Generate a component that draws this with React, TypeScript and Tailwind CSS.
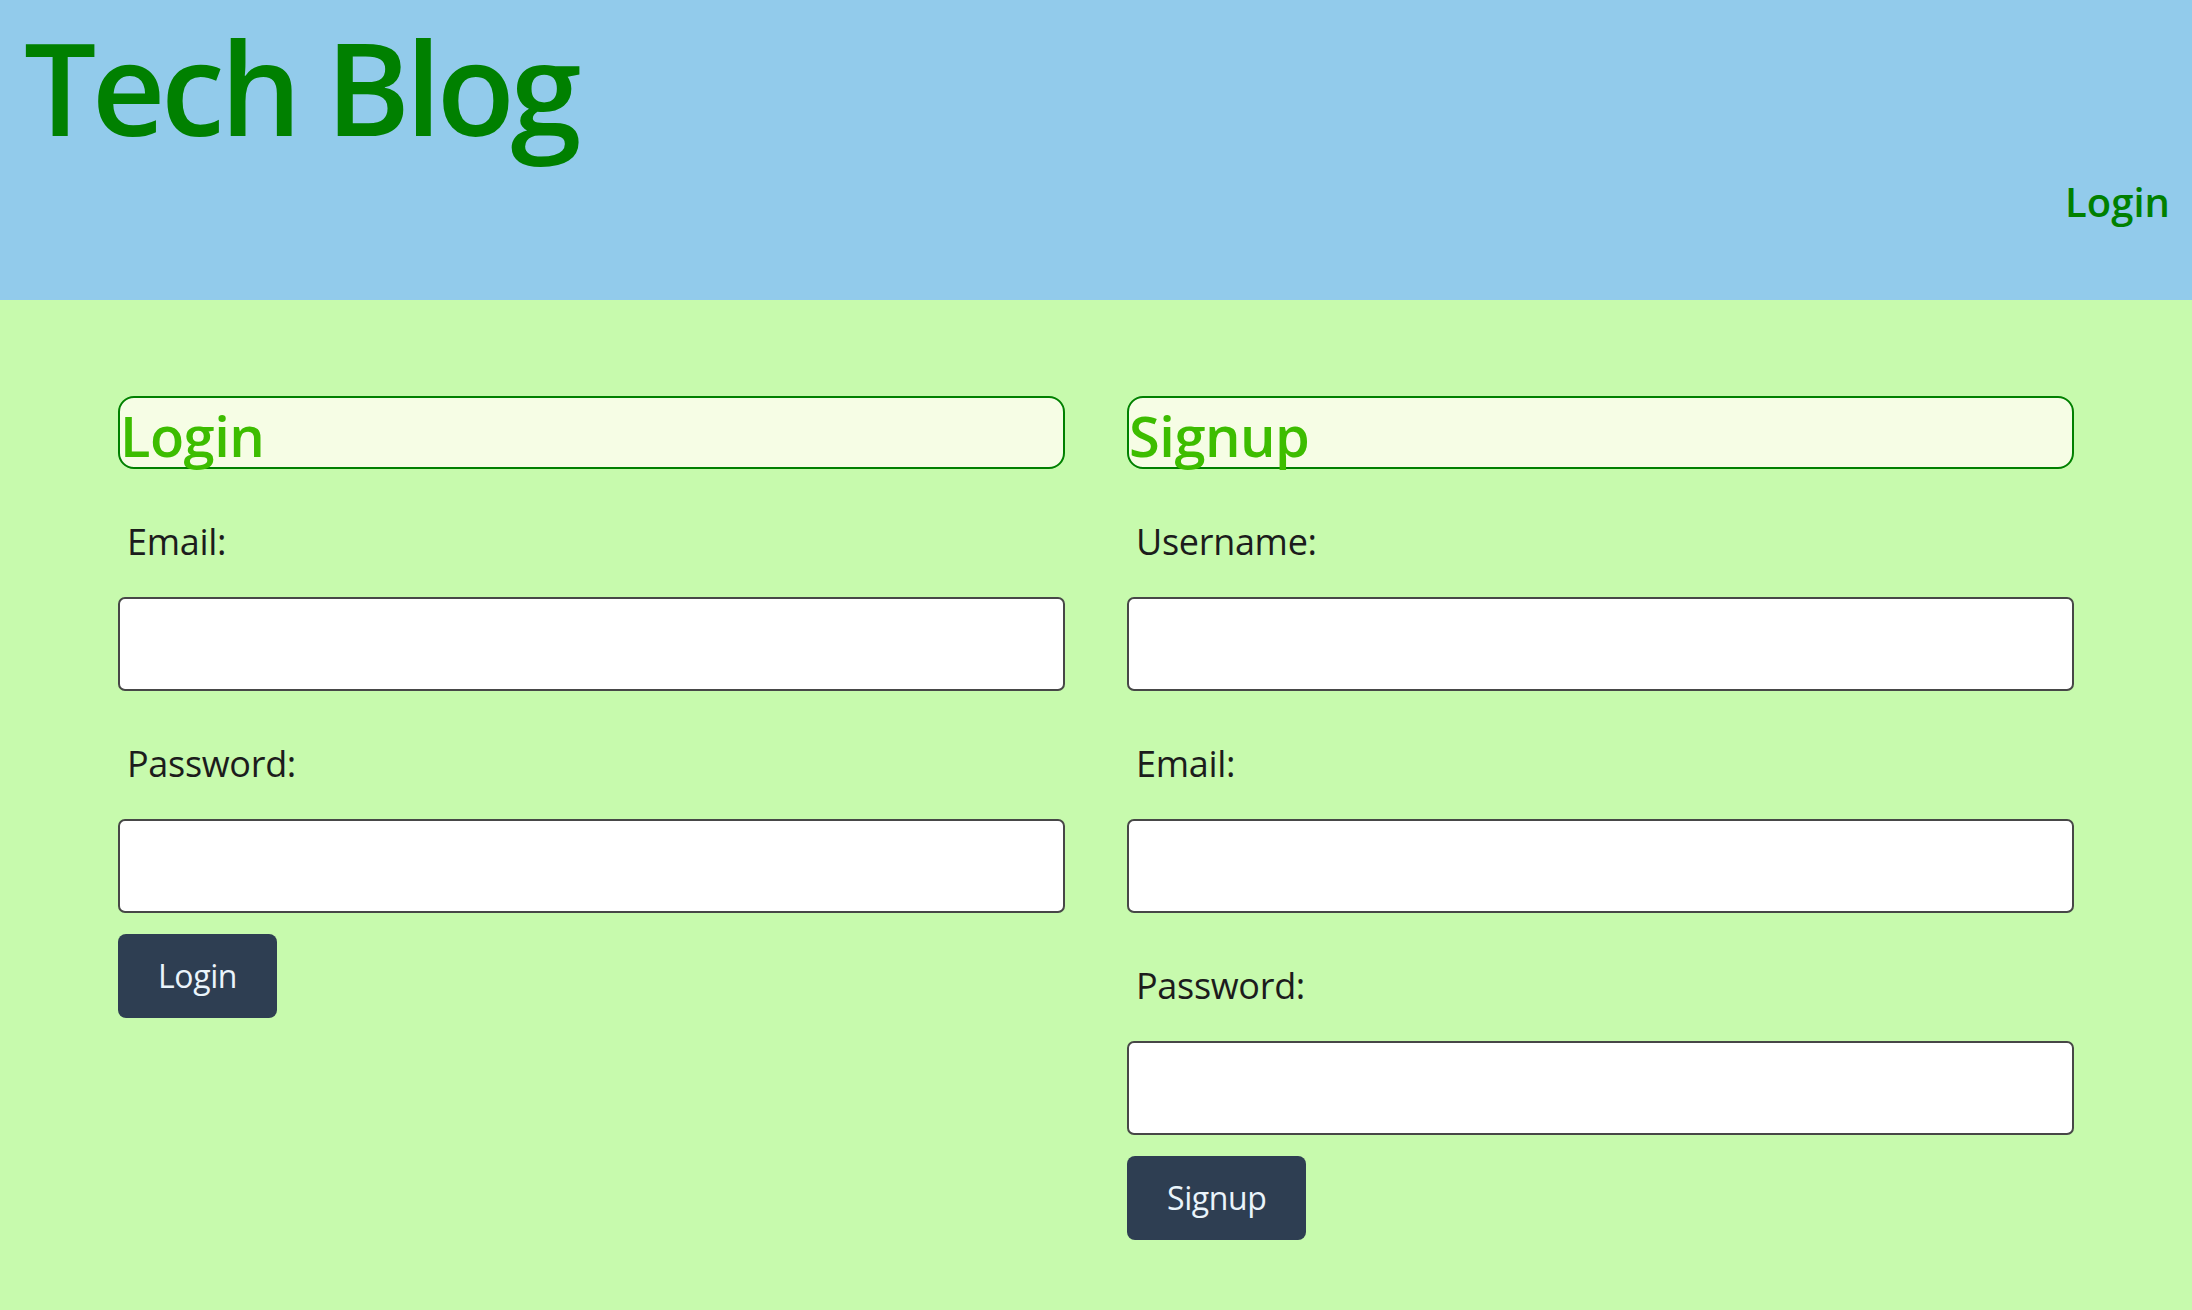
const font = { fontFamily: '"Open Sans", "Noto Sans", sans-serif' }

function Field({ label, type }: { label: string; type: string }) {
  return (
    <div className="flex flex-col">
      <label className="mt-[46px] mb-[28px] pl-[9px] text-[36px] leading-[54px] tracking-[-0.3px] text-[#1c1c1c]">
        {label}
      </label>
      <input
        type={type}
        className="h-[94px] w-full rounded-[7px] border-2 border-[#474747] bg-white px-3 text-[32px] outline-none"
      />
    </div>
  )
}

function FormCard({
  title,
  fields,
  button,
}: {
  title: string
  fields: { label: string; type: string }[]
  button: string
}) {
  return (
    <form className="flex flex-col items-start" onSubmit={(e) => e.preventDefault()}>
      <h2 className="h-[73px] w-full rounded-[16px] border-2 border-[#008000] bg-[#f6fde5] pt-[3px] text-[56px] font-semibold leading-[69px] tracking-[-0.5px] text-[#3dbd00]">
        {title}
      </h2>
      <div className="flex w-full flex-col">
        {fields.map((f) => (
          <Field key={f.label} label={f.label} type={f.type} />
        ))}
      </div>
      <button
        type="submit"
        className="mt-[21px] h-[84px] rounded-[8px] bg-[#2e3e52] px-[40px] text-[32px] tracking-[-0.4px] text-[#eaf4fb]"
      >
        {button}
      </button>
    </form>
  )
}

export default function App() {
  return (
    <div className="min-h-screen bg-[#c7faad]" style={font}>
      <header className="flex h-[300px] items-start justify-between bg-[#92cbeb] pl-[24px] pr-[22px]">
        <h1 className="pr-[8px] text-[128px] font-semibold leading-[174px] tracking-[-4.5px] text-[#008000]">
          Tech Blog
        </h1>
        <nav className="mt-[172px]">
          <a href="#" className="text-[40px] font-semibold leading-[60px] text-[#008000]">
            Login
          </a>
        </nav>
      </header>
      <main className="grid grid-cols-2 gap-x-[62px] px-[118px] pt-[96px] pb-[60px]">
        <FormCard
          title="Login"
          fields={[
            { label: 'Email:', type: 'email' },
            { label: 'Password:', type: 'password' },
          ]}
          button="Login"
        />
        <FormCard
          title="Signup"
          fields={[
            { label: 'Username:', type: 'text' },
            { label: 'Email:', type: 'email' },
            { label: 'Password:', type: 'password' },
          ]}
          button="Signup"
        />
      </main>
    </div>
  )
}
